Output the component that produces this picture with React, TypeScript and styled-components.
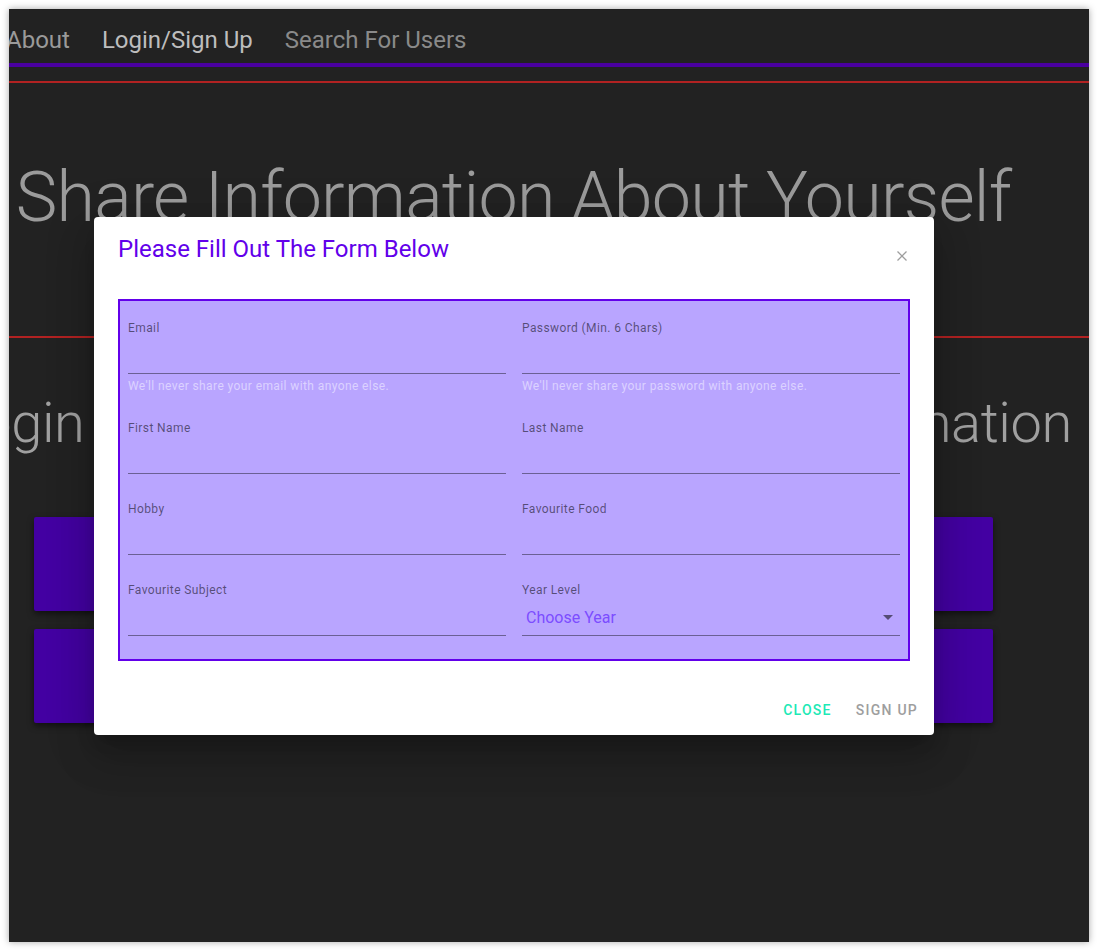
import React from "react";
import styled, { createGlobalStyle } from "styled-components";

const Global = createGlobalStyle`
  html, body { margin: 0; padding: 0; background: #ffffff; }
  body { font-family: Roboto, "Liberation Sans", sans-serif; }
  * { box-sizing: border-box; }
`;

const Frame = styled.div`
  position: relative;
  margin: 9px 8px 8px 9px;
  height: 933px;
  background: #222222;
  overflow: hidden;
  box-shadow: 0 0 7px rgba(0, 0, 0, 0.35);
`;

const Nav = styled.nav`
  display: flex;
  gap: 32px;
  padding: 13px 0 5px;
  border-bottom: 4px solid #4a00a0;
`;

const NavLink = styled.a<{ $tone: string }>`
  margin-left: ${(p) => (p.$tone === "first" ? "-3px" : "0")};
  font-size: 24px;
  line-height: 36px;
  color: ${(p) =>
    p.$tone === "active" ? "#bdbdbd" : p.$tone === "first" ? "#9a9a9a" : "#8a8a8a"};
  text-decoration: none;
  white-space: nowrap;
`;

const Rule = styled.hr<{ $top: number }>`
  margin: ${(p) => p.$top}px 0 0;
  border: 0;
  height: 2px;
  background: #b22222;
`;

const Main = styled.section`
  padding-right: 71px;
  text-align: center;
`;

const HeroTitle = styled.h1`
  margin: 72px 0 0;
  font-size: 70px;
  font-weight: 300;
  letter-spacing: -0.8px;
  line-height: 84px;
  color: #9b9b9b;
  white-space: nowrap;
`;

const SubTitle = styled.h2`
  margin: 52px -198px 0 -202px;
  font-size: 56px;
  font-weight: 300;
  letter-spacing: -0.4px;
  line-height: 1.2;
  color: #a0a0a0;
  white-space: nowrap;
`;

const ButtonStack = styled.div`
  display: flex;
  flex-direction: column;
  gap: 18px;
  margin: 60px 25px 0;
`;

const BigButton = styled.button`
  height: 94px;
  border: 0;
  border-radius: 2px;
  background: #4300a2;
  color: #ffffff;
  font-family: Roboto, "Liberation Sans", sans-serif;
  font-size: 24px;
  box-shadow: 0 3px 6px rgba(0, 0, 0, 0.5);
`;

const Dialog = styled.div`
  position: absolute;
  left: 85px;
  top: 208px;
  width: 840px;
  height: 518px;
  background: #ffffff;
  border-radius: 4px;
  box-shadow: 0px 11px 15px -7px rgba(0, 0, 0, 0.2),
    0px 24px 38px 3px rgba(0, 0, 0, 0.14), 0px 9px 46px 8px rgba(0, 0, 0, 0.12);
  display: flex;
  flex-direction: column;
`;

const DialogTitle = styled.h2`
  margin: 0;
  padding: 16px 24px 0;
  font-size: 24px;
  font-weight: 400;
  line-height: 32px;
  color: #6200ea;
`;

const CloseIcon = styled.button`
  position: absolute;
  right: 26px;
  top: 33px;
  width: 12px;
  height: 12px;
  padding: 0;
  border: 0;
  background: transparent;
  display: flex;
`;

const Form = styled.form`
  margin: 34px 24px 0;
  padding: 20px 8px 23px;
  border: 2px solid #6200ea;
  background: #b9a5ff;
  display: grid;
  grid-template-columns: 1fr 1fr;
  column-gap: 16px;
  row-gap: 28px;
`;

const Field = styled.div`
  display: flex;
  flex-direction: column;
`;

const Label = styled.label`
  font-size: 12px;
  line-height: 14px;
  letter-spacing: 0.4px;
  color: rgba(0, 0, 0, 0.54);
`;

const Input = styled.input`
  height: 39px;
  border: 0;
  border-bottom: 1px solid rgba(0, 0, 0, 0.42);
  background: transparent;
  font-family: Roboto, "Liberation Sans", sans-serif;
  font-size: 16px;
  outline: none;
`;

const Helper = styled.p`
  margin: 5px 0 0;
  font-size: 12px;
  line-height: 14px;
  letter-spacing: 0.4px;
  color: rgba(255, 255, 255, 0.5);
`;

const Select = styled.div`
  height: 39px;
  display: flex;
  align-items: center;
  justify-content: space-between;
  padding: 3px 7px 0 4px;
  border-bottom: 1px solid rgba(0, 0, 0, 0.42);
  font-size: 16px;
  line-height: 19px;
  color: #7c4dff;
`;

const Actions = styled.div`
  margin-top: 22px;
  padding: 8px;
  display: flex;
  justify-content: flex-end;
  gap: 8px;
`;

const TextButton = styled.button<{ $accent?: boolean }>`
  padding: 7px 8px 5px;
  border: 0;
  background: transparent;
  font-family: Roboto, "Liberation Sans", sans-serif;
  font-size: 14px;
  font-weight: 500;
  line-height: 24px;
  letter-spacing: 1.25px;
  text-transform: uppercase;
  color: ${(p) => (p.$accent ? "#1de9b6" : "#9e9e9e")};
`;

const fields: { label: string; helper?: string }[] = [
  { label: "Email", helper: "We'll never share your email with anyone else." },
  { label: "Password (Min. 6 Chars)", helper: "We'll never share your password with anyone else." },
  { label: "First Name" },
  { label: "Last Name" },
  { label: "Hobby" },
  { label: "Favourite Food" },
  { label: "Favourite Subject" },
];

export default function App() {
  return (
    <>
      <Global />
      <Frame>
        <Nav>
          <NavLink $tone="first">About</NavLink>
          <NavLink $tone="active">Login/Sign Up</NavLink>
          <NavLink $tone="normal">Search For Users</NavLink>
        </Nav>
        <Rule $top={14} />
        <Main>
          <HeroTitle>Share Information About Yourself</HeroTitle>
        </Main>
        <Rule $top={97} />
        <Main>
          <SubTitle>Login Or Sign Up To Share All Your Information</SubTitle>
          <ButtonStack>
            <BigButton>Login</BigButton>
            <BigButton>Sign Up</BigButton>
          </ButtonStack>
        </Main>

        <Dialog>
          <DialogTitle>Please Fill Out The Form Below</DialogTitle>
          <CloseIcon aria-label="close">
            <svg width="12" height="12" viewBox="0 0 12 12">
              <path d="M1.5 1.5 L10.5 10.5 M10.5 1.5 L1.5 10.5" stroke="#9e9e9e" strokeWidth="1.3" fill="none" />
            </svg>
          </CloseIcon>
          <Form>
            {fields.map((f) => (
              <Field key={f.label}>
                <Label>{f.label}</Label>
                <Input />
                {f.helper && <Helper>{f.helper}</Helper>}
              </Field>
            ))}
            <Field>
              <Label>Year Level</Label>
              <Select>
                <span>Choose Year</span>
                <svg width="10" height="5" viewBox="0 0 10 5">
                  <path d="M0 0 L10 0 L5 5 Z" fill="rgba(0,0,0,0.54)" />
                </svg>
              </Select>
            </Field>
          </Form>
          <Actions>
            <TextButton type="button" $accent>Close</TextButton>
            <TextButton type="button">Sign Up</TextButton>
          </Actions>
        </Dialog>
      </Frame>
    </>
  );
}
